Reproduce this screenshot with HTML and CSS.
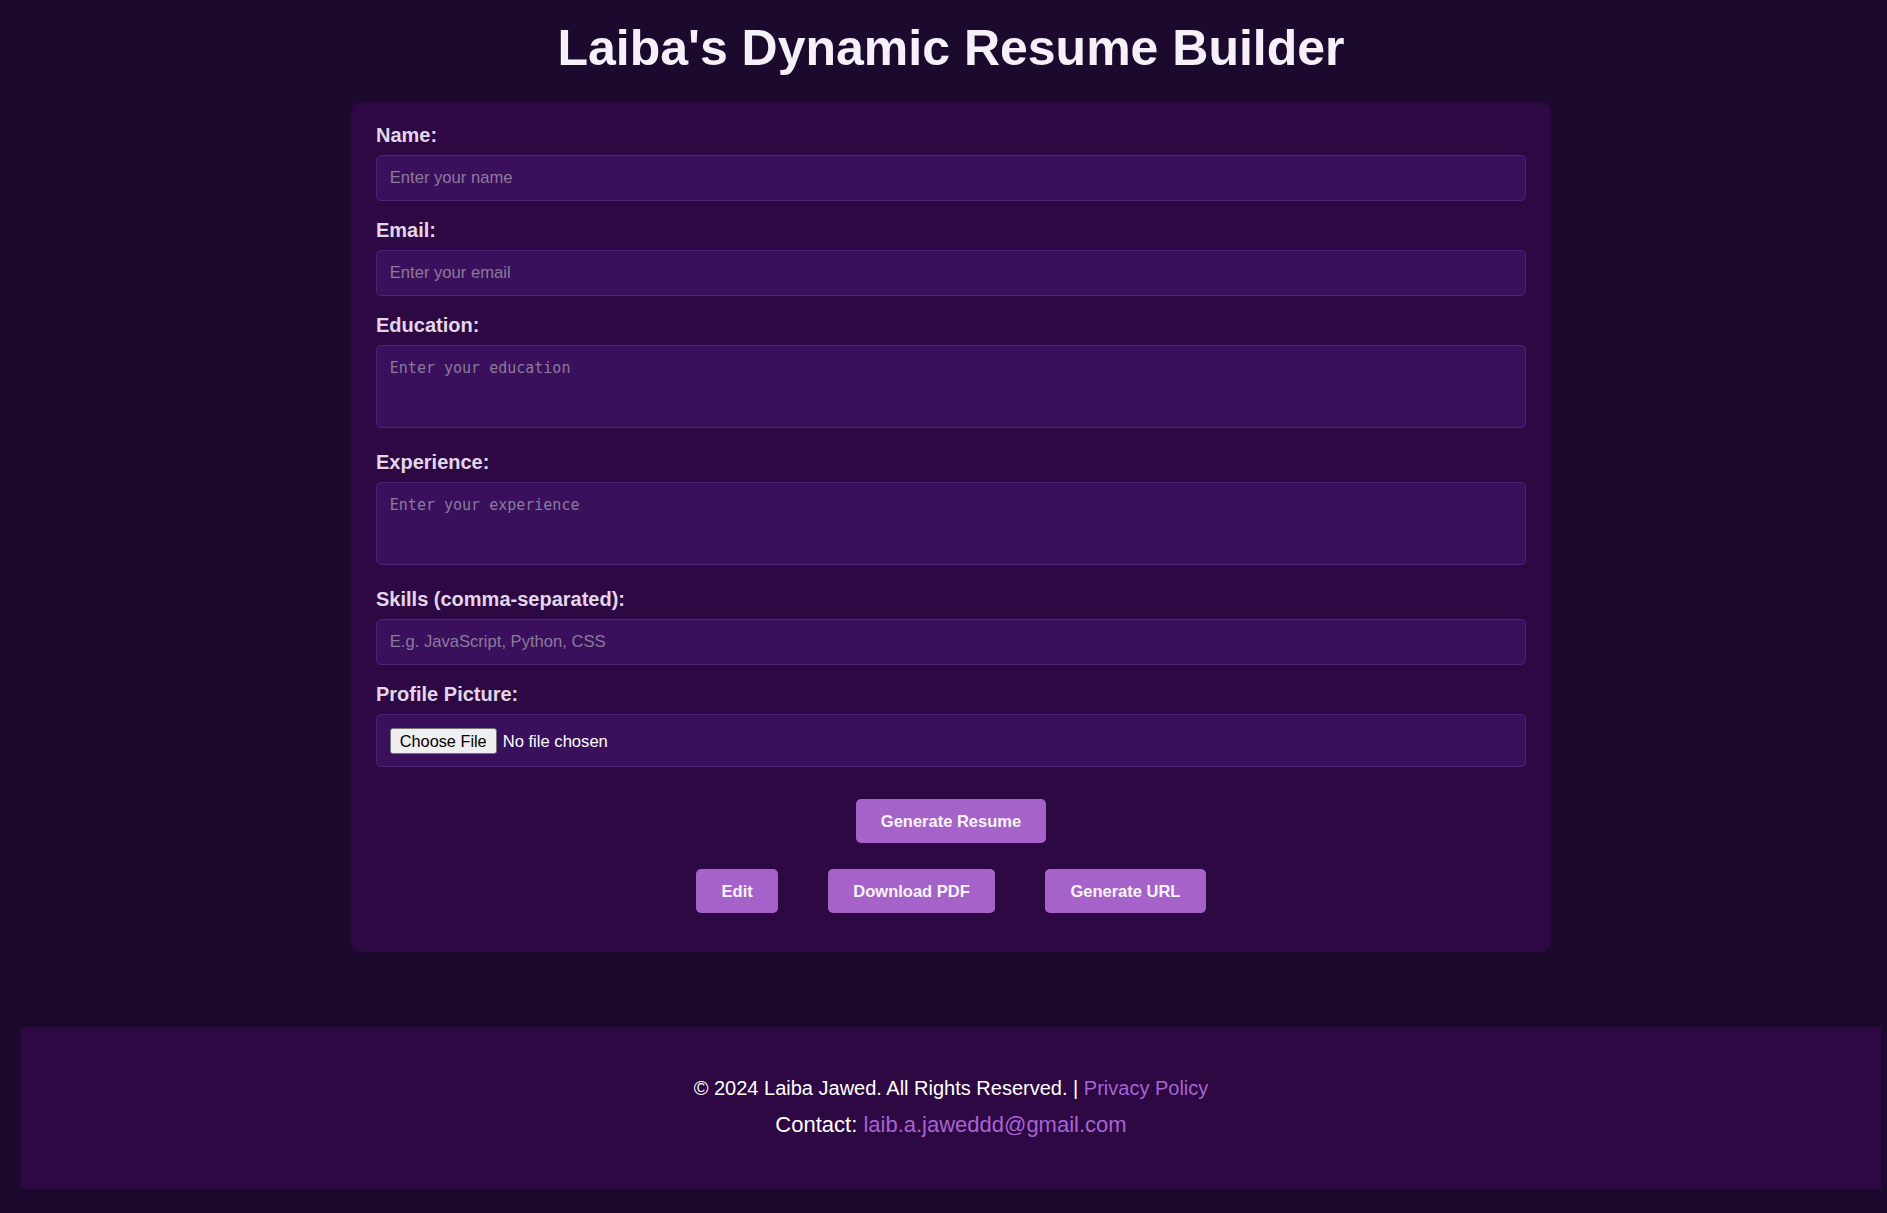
FILE: index.html
```html
<!DOCTYPE html>
<html lang="en">
<head>
<meta charset="UTF-8">
<title>Laiba's Dynamic Resume Builder</title>
<link rel="stylesheet" href="styles.css">
</head>
<body>
  <h1 class="page-title">Laiba's Dynamic Resume Builder</h1>
  <main class="card">
    <form class="resume-form">
      <label class="field-label" for="name">Name:</label>
      <input class="field-input" type="text" id="name" placeholder="Enter your name">

      <label class="field-label" for="email">Email:</label>
      <input class="field-input" type="email" id="email" placeholder="Enter your email">

      <label class="field-label" for="education">Education:</label>
      <textarea class="field-area" id="education" placeholder="Enter your education"></textarea>

      <label class="field-label" for="experience">Experience:</label>
      <textarea class="field-area" id="experience" placeholder="Enter your experience"></textarea>

      <label class="field-label" for="skills">Skills (comma-separated):</label>
      <input class="field-input" type="text" id="skills" placeholder="E.g. JavaScript, Python, CSS">

      <label class="field-label" for="picture">Profile Picture:</label>
      <input class="field-input file-input" type="file" id="picture">

      <div class="generate-row">
        <button type="button" class="btn">Generate Resume</button>
      </div>
      <div class="action-row">
        <button type="button" class="btn">Edit</button>
        <button type="button" class="btn">Download PDF</button>
        <button type="button" class="btn">Generate URL</button>
      </div>
    </form>
  </main>
  <footer class="site-footer">
    <p class="footer-line">© 2024 Laiba Jawed. All Rights Reserved. | <a class="footer-link" href="#">Privacy Policy</a></p>
    <p class="footer-line footer-contact">Contact: <a class="footer-link" href="#">laib.a.jaweddd@gmail.com</a></p>
  </footer>
</body>
</html>
```

FILE: styles.css
```css
* {
  box-sizing: border-box;
}

html {
  background: #1b0a2e;
}

body {
  margin: 0;
  padding: 0 6px 25px 21px;
  background: #1b0a2e;
  font-family: "Liberation Sans", Arial, sans-serif;
  color: #ffffff;
}

.page-title {
  margin: 19px 0 25px;
  font-size: 50px;
  font-weight: bold;
  text-align: center;
  color: #f6f1f9;
}

.card {
  display: block;
  max-width: 1200px;
  margin: 0 auto;
  padding: 22px 25px 39px;
  background: #2d0842;
  border-radius: 10px;
}

.resume-form {
  display: flex;
  flex-direction: column;
  margin: 0;
}

.field-label {
  display: block;
  margin-bottom: 8px;
  font-size: 20px;
  line-height: 23px;
  font-weight: bold;
  color: #e2d6ea;
}

.field-input,
.field-area {
  display: block;
  width: 100%;
  margin: 0 0 18px;
  padding: 12.8px;
  background: #3a105c;
  border: 1px solid #4f2379;
  border-radius: 5px;
  color: #ffffff;
  font-family: "Liberation Sans", Arial, sans-serif;
  font-size: 16.6px;
  line-height: 18.4px;
  outline: none;
}

.field-area {
  height: 83.3px;
  margin-bottom: 22.6px;
  resize: none;
  font-family: "DejaVu Sans Mono", "Liberation Mono", monospace;
  font-size: 15px;
  line-height: 18.75px;
}

.field-input::placeholder,
.field-area::placeholder {
  color: #8b7a9b;
  opacity: 1;
}

.file-input {
  font-size: 16.6px;
}

.file-input::file-selector-button {
  margin-right: 6px;
  padding: 2px 9px;
  background: #efefef;
  border: 1px solid #767676;
  border-radius: 3px;
  color: #000000;
  font-family: "Liberation Sans", Arial, sans-serif;
  font-size: 16.3px;
  line-height: 20px;
}

.generate-row {
  display: flex;
  justify-content: center;
  margin-top: 13.8px;
}

.action-row {
  display: flex;
  justify-content: center;
  gap: 50px;
  margin-top: 25.6px;
}

.btn {
  padding: 12.8px 25.3px;
  background: #a563c9;
  border: none;
  border-radius: 5px;
  color: #f8f3fb;
  font-family: "Liberation Sans", Arial, sans-serif;
  font-size: 16.5px;
  font-weight: bold;
  line-height: 18.4px;
  cursor: pointer;
}

.site-footer {
  margin-top: 75px;
  padding: 50px 20px 51px;
  background: #2d0842;
  text-align: center;
}

.footer-line {
  margin: 0;
  font-size: 20px;
  color: #ffffff;
}

.footer-contact {
  margin-top: 12px;
  font-size: 22px;
}

.footer-link {
  color: #a664d4;
  text-decoration: none;
}
```
